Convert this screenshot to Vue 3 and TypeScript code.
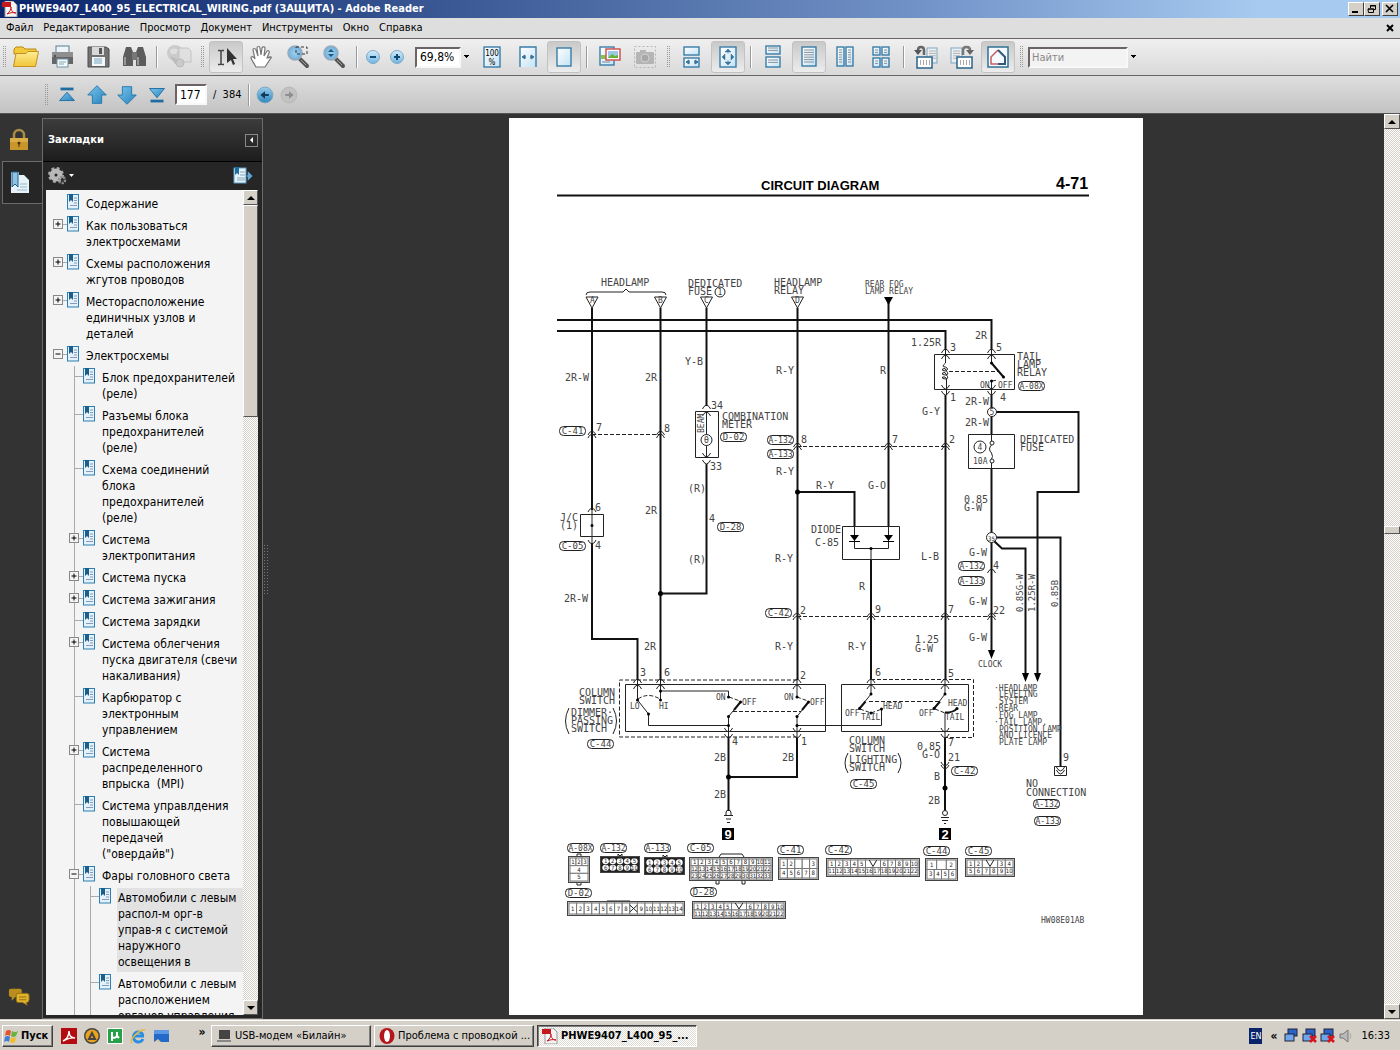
<script setup lang="ts">
import { ref } from 'vue'

interface Bookmark { level: number; text: string; state?: '+' | '−'; selected?: boolean }
interface Tool { kind: 'btn' | 'sep' | 'grip' | 'small'; icon?: string; label?: string; on?: boolean; off?: boolean }

const zoom = ref('69,8%')
const page = ref('177')
const query = ref('')

const menu = ['Файл', 'Редактирование', 'Просмотр', 'Документ', 'Инструменты', 'Окно', 'Справка']

const lens = '<path d="M16 16l7 7" stroke="#555" stroke-width="4" stroke-linecap="round"/><path d="M17 17l5 5" stroke="#999" stroke-width="1"/><circle cx="11" cy="10" r="7" fill="url(#gLens)" stroke="#9ab" stroke-width="1.5"/>'
const sheet = (x: number, y: number, w: number, h: number) =>
  `<rect x="${x}" y="${y}" width="${w}" height="${h}" fill="url(#gPage)" stroke="#3a7ca8" stroke-width="1.4"/>`
const lines = (x: number, y: number, w: number, n: number) =>
  Array.from({ length: n }, (_, i) => `<path d="M${x} ${y + i * 2.4}h${w}" stroke="#8a9298" stroke-width="1"/>`).join('')
const arrowsH = (y: number) =>
  `<path d="M9 ${y}h3M16 ${y}h3M11 ${y - 2}l-3 2 3 2zM17 ${y - 2}l3 2-3 2z" stroke="#3b7397" fill="#3b7397" stroke-width="1"/>`
const calendar = '<rect x="5" y="14" width="15" height="11" fill="#fff" stroke="#2a648b" stroke-width="1.5"/><path d="M8.500 17v5M11.500 17v5M14.500 17v5M17.500 17v5" stroke="#aaa"/>'

const icons: Record<string, string> = {
  open: '<path d="M2 6l2-2h7l2 2h11v5H2z" fill="#f3c93c" stroke="#b98a16"/><path d="M1.500 23.500L4 10.500h10l2-2h10.500l-3 15z" fill="url(#gFold)" stroke="#c0911b"/>',
  print: '<rect x="8" y="3" width="13" height="8" fill="#eef4f8" stroke="#557d95"/><path d="M4 9h21v12H4z" fill="#666"/><path d="M4 9h21v5H4z" fill="#8e8e8e"/><rect x="9" y="16" width="11" height="8" fill="#f4f8fa" stroke="#6c93aa"/><path d="M11 19h7M11 21h5" stroke="#8aa"/><circle cx="7" cy="13" r="1" fill="#3a3a3a"/>',
  save: '<path d="M4 4h18l3 2v18H4z" fill="#727272" stroke="#4d4d4d"/><rect x="8" y="4" width="12" height="8" fill="#d9d9d9"/><rect x="15" y="5" width="3" height="6" fill="#555"/><rect x="8" y="14" width="13" height="9" fill="#f1f7fa"/><path d="M10 16h8M10 18h8M10 20h8" stroke="#7aa6bf"/>',
  find: '<path d="M6 4h5l2 5v14H3V14z" fill="#5c5c5c"/><path d="M18 4h5l3 10v9H16V9z" fill="#5c5c5c"/><rect x="12" y="9" width="5" height="8" fill="#777"/><path d="M5 14v8M18 14v8" stroke="#aaa" stroke-width="1.500"/>',
  collab: '<circle cx="10" cy="10" r="8" fill="#c5c5c5"/><path d="M5 7q4-3 8 0l-2 4H6z" fill="#dedede"/><path d="M14 5h9l3 3v11H14z" fill="#dfdfdf" stroke="#bbb"/><path d="M5 13l7 3 3 4-5 1z" fill="#b2b2b2"/><circle cx="15" cy="20" r="4" fill="#c5c5c5" stroke="#b2b2b2"/>',
  select: '<path d="M6 7.500h2q1 0 1 1 0-1 1-1h2M9 8v13M6 21.500h2q1 0 1-1 0 1 1 1h2" fill="none" stroke="#444" stroke-width="1.500"/><path d="M15 5v15l4-3 2 5 2-1-2-5h4z" fill="#333"/>',
  hand: '<path d="M8 24c-2-4-4-6-5-9 0-2 2-2 4 1L5 7c0-2 2-2 3 0l2 6-1-8c0-2 3-2 3 0l1 7 1-7c1-2 3-1 3 0l-1 8 3-5c1-1 3 0 2 2l-2 5 1 0c2-2 4-1 3 0l-6 9z" fill="#fff" stroke="#777" stroke-width="1.200"/>',
  marquee: lens + '<path d="M12 4h11v7H12z" fill="none" stroke="#333" stroke-dasharray="3 2"/>',
  zoom: lens + '<path d="M8 9l3-3 3 3zM8 11l3 3 3-3z" fill="#1f5578"/>',
  minus: '<circle cx="14" cy="14" r="6.500" fill="url(#gBall)" stroke="#7ea9c4"/><path d="M11 14h6" stroke="#104a72" stroke-width="2"/>',
  plus: '<circle cx="14" cy="14" r="6.500" fill="url(#gBall)" stroke="#7ea9c4"/><path d="M11 14h6M14 11v6" stroke="#104a72" stroke-width="2"/>',
  actual: sheet(6, 4, 16, 20) + '<text x="14" y="13" text-anchor="middle" font-family="DejaVu Sans Condensed" font-size="8">100</text><text x="14" y="22" text-anchor="middle" font-family="DejaVu Sans Condensed" font-size="8">%</text>',
  width: '<path d="M6 24V4h16v20" fill="url(#gPage)" stroke="#3a7ca8" stroke-width="1.400"/>' + arrowsH(14),
  single: sheet(7, 5, 14, 18),
  pics: sheet(5, 4, 14, 18) + '<path d="M6 12h8v4H6z" fill="#8bc34a"/><rect x="11" y="6" width="14" height="11" fill="#fff" stroke="#c55" stroke-width="1.500"/><path d="M13 8h10v7H13z" fill="#9cc9e8"/><path d="M13 15l4-4 3 2 3-1v3z" fill="#65b32e"/><path d="M7 19h8" stroke="#789"/>',
  camera: '<rect x="3.500" y="3.500" width="21" height="21" fill="none" stroke="#aaa" stroke-dasharray="2 2"/><rect x="5" y="9" width="18" height="12" rx="1" fill="#aaa"/><rect x="9" y="7" width="6" height="3" fill="#aaa"/><circle cx="14" cy="15" r="4" fill="#999" stroke="#ccc"/>',
  contw: sheet(6, 4, 15, 8) + sheet(6, 15, 15, 9) + '<g transform="translate(0 5)">' + arrowsH(14) + '</g>',
  fitpage: sheet(6, 4, 16, 20) + '<path d="M14 6l3 3h-6zM14 22l3-3h-6zM8 14l3-3v6zM20 14l-3-3v6zM14 8v3M14 17v3" fill="#3b7397" stroke="#3b7397" stroke-width=".5"/>',
  cont: sheet(7, 3, 14, 8) + lines(9, 5, 10, 2) + sheet(7, 14, 14, 10) + lines(9, 17, 10, 2),
  one: sheet(7, 4, 14, 19) + lines(9, 7, 10, 6),
  two: sheet(6, 4, 7, 19) + sheet(15, 4, 7, 19) + lines(8, 7, 3, 6) + lines(17, 7, 3, 6),
  four: sheet(6, 4, 7, 8) + sheet(15, 4, 7, 8) + sheet(6, 15, 7, 9) + sheet(15, 15, 7, 9) + lines(8, 7, 3, 2) + lines(17, 7, 3, 2) + lines(8, 18, 3, 2) + lines(17, 18, 3, 2),
  rotl: '<g opacity=".6"><rect x="15" y="5" width="10" height="15" fill="#eef5fa" stroke="#3a7ca8"/>' + lines(17, 8, 7, 4) + '</g>' + calendar + '<path d="M12 12V7c0-4-6-4-6 0v1" stroke="#666" stroke-width="2.500" fill="none"/><path d="M2 7h8l-4 5z" fill="#555"/>',
  rotr: '<g opacity=".6"><rect x="3" y="5" width="11" height="15" fill="#eef5fa" stroke="#3a7ca8"/>' + lines(5, 8, 7, 4) + '</g><g transform="translate(4 0)">' + calendar + '</g><path d="M15 12V7c0-4 7-4 7 0v1" stroke="#777" stroke-width="2.500" fill="none"/><path d="M18 7h8l-4 5z" fill="#666"/>',
  home: '<rect x="4" y="4" width="20" height="20" fill="#f4fafd" stroke="#2e7193" stroke-width="1.500"/><path d="M14 7l-7 7v7h7" fill="none" stroke="#c65b66" stroke-width="1.500"/><path d="M14 7l7 7v7h-7" fill="none" stroke="#35587a" stroke-width="2"/>',
  first: '<path d="M7 7.500h14" stroke="#1f6da1" stroke-width="3"/><path d="M14 11l8 9H6z" fill="url(#gBlue)" stroke="#1f6da1"/>',
  prev: '<path d="M14 4l10 10h-5v9H9v-9H4z" fill="url(#gBlue)" stroke="#2377ab"/>',
  next: '<path d="M14 24L4 14h5V5h10v9h5z" fill="url(#gBlue)" stroke="#2377ab"/>',
  last: '<path d="M7 20.500h14" stroke="#1f6da1" stroke-width="3"/><path d="M14 17l8-10H6z" fill="url(#gBlue)" stroke="#1f6da1"/>',
  back: '<circle cx="14" cy="14" r="8.500" fill="url(#gBall2)" stroke="#79a5c0"/><path d="M9 14l5-4v3h4v2h-4v3z" fill="#0e3a5c"/>',
  fwd: '<circle cx="14" cy="14" r="8.500" fill="#c2c2c2" stroke="#b5b5b5"/><path d="M19 14l-5-4v3h-4v2h4v3z" fill="#8e8e8e"/>',
}

const b = (icon: string, label: string, extra: Partial<Tool> = {}): Tool => ({ kind: 'btn', icon, label, ...extra })
const sep: Tool = { kind: 'sep' }
const grip: Tool = { kind: 'grip' }
const toolsA: Tool[] = [
  b('open', 'Открыть'), b('print', 'Печать'), b('save', 'Сохранить'), b('find', 'Поиск'), sep, b('collab', 'Совместная работа', { off: true }), grip,
  b('select', 'Выделение', { on: true }), b('hand', 'Рука'), b('marquee', 'Увеличение области'), b('zoom', 'Динамический масштаб'), sep,
  { kind: 'small', icon: 'minus', label: 'Уменьшить' }, { kind: 'small', icon: 'plus', label: 'Увеличить' },
]
const toolsB: Tool[] = [
  b('actual', 'Реальный размер'), b('width', 'По ширине'), b('single', 'Целиком', { on: true }), sep,
  b('pics', 'Изображения'), b('camera', 'Снимок', { off: true }), grip,
  b('contw', 'Прокрутка по ширине'), b('fitpage', 'По размеру страницы', { on: true }), sep,
  b('cont', 'Непрерывно'), b('one', 'Одна страница', { on: true }), b('two', 'Разворот'), b('four', 'Четыре страницы'), sep,
  b('rotl', 'Повернуть влево'), b('rotr', 'Повернуть вправо'), b('home', 'Сглаживание линий', { on: true }), grip,
]
const navTools: Tool[] = [b('first', 'Первая'), b('prev', 'Предыдущая'), b('next', 'Следующая'), b('last', 'Последняя')]

const bookmarks: Bookmark[] = [
  { level: 0, text: 'Содержание' },
  { level: 0, state: '+', text: 'Как пользоваться\nэлектросхемами' },
  { level: 0, state: '+', text: 'Схемы расположения\nжгутов проводов' },
  { level: 0, state: '+', text: 'Месторасположение\nединичных узлов и\nдеталей' },
  { level: 0, state: '−', text: 'Электросхемы' },
  { level: 1, text: 'Блок предохранителей\n(реле)' },
  { level: 1, text: 'Разъемы блока\nпредохранителей\n(реле)' },
  { level: 1, text: 'Схема соединений\nблока\nпредохранителей\n(реле)' },
  { level: 1, state: '+', text: 'Система\nэлектропитания' },
  { level: 1, state: '+', text: 'Система пуска' },
  { level: 1, state: '+', text: 'Система зажигания' },
  { level: 1, text: 'Система зарядки' },
  { level: 1, state: '+', text: 'Система облегчения\nпуска двигателя (свечи\nнакаливания)' },
  { level: 1, text: 'Карбюратор с\nэлектронным\nуправлением' },
  { level: 1, state: '+', text: 'Система\nраспределенного\nвпрыска  (MPI)' },
  { level: 1, text: 'Система управлдения\nповышающей\nпередачей\n("овердайв")' },
  { level: 1, state: '−', text: 'Фары головного света' },
  { level: 2, selected: true, text: 'Автомобили с левым\nраспол-м орг-в\nуправ-я с системой\nнаружного\nосвещения в' },
  { level: 2, text: 'Автомобили с левым\nрасположением\nорганов управления' },
]

// Wiring sheet. All coordinates are in the user space of the drawing's viewBox.
const wires = [
  'M557 320H991.5V350', 'M557 331H945.500V350', 'M592 308V510', 'M660.500 308V680', 'M706.500 308V406', 'M797.500 308V680',
  'M888.500 300V526', 'M945.500 395V680', 'M991.500 395V434', 'M996 412H1078.500V492H1037.500V676', 'M991.500 469V654',
  'M592 543V639H637.500V680', 'M706.500 464V593.500H660.500', 'M797.500 492H854.500V526', 'M871 560V680', 'M996 537.500H1060.500V767',
  'M994 541L1002 548.500H1025.500V676', 'M728.500 738V811', 'M797 738V777H728.500', 'M945 738V811',
]
const thin = [
  'M586 295q0-3 4-3h33l3-3 3 3h33q4 0 4 3',
  'M586 297h12l-6 11z', 'M654.500 297h12l-6 11z', 'M700.500 297h12l-6 11z', 'M791.500 297h12l-6 11z',
  'M695.500 411.500h23v46h-23z', 'M706.500 411v46', 'M934.500 354.500h80v35h-80z', 'M968.500 434.500h46v34h-46z',
  'M580.500 514.500h23v22h-23z', 'M592 510v33', 'M842.500 526.500h57v33h-57z', 'M854.500 526V548.500H888.500V526', 'M871 548V560',
  'M945.500 350V363q-5 4 0 4q4 2 0 4q-4 0-3-2q3-2 4 2q3 4-1 4q-4 0-3-2q3-2 4 2q3 4-1 4q-4 0-3-2q3-1 4 2V395',
  'M991.500 350V363L1003.500 377', 'M991.500 381V395', 'M991.500 434v7m0 4q-4 4 0 8q2 4 0 6m0 4v6',
  'M625.500 684.500h200v47h-200z', 'M841.500 684.500h127v47h-127z',
  'M637.500 680v20l11 14v11.500h80', 'M660.500 680v20M660.500 691H728.500v6', 'M740.500 702L728.500 716.500V738', 'M797 680V697', 'M808.500 702L797 716.500V738', 'M797 725.500H881.500V709',
  'M871 680v14l-11.500 14.500', 'M945 680v14l-11 14.500', 'M945 712.500V738',
  'M569 708q-7 13 0 26', 'M613 708q7 13 0 26', 'M848 753q-6 10 0 20', 'M898 753q6 10 0 20',
  'M1054.500 766.500h12v9h-12z',
  'M726 815v-2q0-3 2.500-3t2.500 3v2M724 815.500h9M726 819h5M727 822.500h3', 'M941 817.500h8M942 820.500h6M944 823.500h2',
]
const dashed = [
  'M592 434.500H660', 'M797 446.500H945', 'M797 616.500H991', 'M949 371.500H998', 'M797 680H619.500V737H797', 'M871 679.500H973.500V737.500H945',
  'M638 699q10-7 22 0', 'M729 697l11 4', 'M797 697l11 4', 'M733 711.500H801', 'M869 701.500H939', 'M860 709l11 4 11-4', 'M935 709l10 4', 'M992 381l6-1',
]
const heavy = ['M945 712.500q9 0 12-4', 'M991.500 363L1003.500 377', 'M740.500 702L734 710', 'M808.500 702L802 710', 'M859.500 708.500l6-7', 'M934 708.500l6-7']
const solids = ['M884 297h9l-4.500 8z', 'M850 535h9l-4.500 6z', 'M884 535h9l-4.500 6z', 'M849 541h11v1h-11z', 'M883 541h11v1h-11z', 'M988 650h7l-3.500 9z', 'M1022 673h7l-3.500 9z', 'M1034 673h7l-3.500 9z']
const dots: [number, number, number][] = [
  [592, 525.5, 1.5], [660.5, 593.5, 2.5], [797.5, 492, 2.5], [871, 548.5, 1.5], [991.5, 363, 1.5], [1003.5, 377, 1.5], [991.5, 381, 1.5],
  [637.5, 700, 1.5], [660.5, 691, 1.5], [660.5, 700, 1.5], [648.5, 714, 1.5], [728.5, 697, 1.5], [740.5, 702, 1.5], [728.5, 716.5, 1.5], [728.5, 725.5, 1.5],
  [797, 697, 1.5], [808.5, 702, 1.5], [797, 716.5, 1.5], [797, 725.5, 1.5], [728.5, 777, 2.5], [945, 788, 2.5],
  [871, 694, 1.5], [859.5, 708.5, 1.5], [871, 713, 1.5], [881.5, 709, 1.5], [945, 694, 1.5], [934, 708.5, 1.5], [957, 708.5, 1.5],
]
const rings: [number, number, number, string][] = [
  [720, 292, 5, '1'], [706.5, 440, 5.5, 'Ө'], [992, 412, 4.5, '5'], [980, 447, 6, '4'], [992, 443, 2, ''], [992, 461, 2, ''], [991.5, 537.5, 5, '35'], [945, 813, 2.5, ''],
]
const up: [number, number][] = [
  [706.5, 405], [706.5, 412], [945.5, 349], [945.5, 355], [991.5, 349], [991.5, 355], [592, 508], [637.5, 679], [637.5, 685], [660.5, 679], [660.5, 685],
  [797, 679], [797, 685], [871, 679], [871, 685], [945, 679], [945, 685], [592, 431], [592, 434], [660.5, 431], [660.5, 434], [797.5, 443], [797.5, 446],
  [888.5, 443], [888.5, 446], [945.5, 443], [945.5, 446], [797, 613], [797, 616], [871, 613], [871, 616], [945, 613], [945, 616], [991.5, 613], [991.5, 616], [991.5, 569],
]
const down: [number, number][] = [
  [706.5, 457], [706.5, 464], [945.5, 389], [945.5, 395], [991.5, 389], [991.5, 395], [592, 544], [728.5, 732], [728.5, 738], [797, 732], [797, 738],
  [945, 732], [945, 738], [945, 766], [945, 769], [1060.5, 771], [1060.5, 774],
]
const labels: [number, number, string][] = [
  [601, 286, 'HEADLAMP'], [688, 287, 'DEDICATED'], [688, 295, 'FUSE'], [774, 286, 'HEADLAMP'], [774, 294, 'RELAY'],
  [565, 381, '2R-W'], [645, 381, '2R'], [685, 365, 'Y-B'], [776, 374, 'R-Y'], [711, 409, '34'], [596, 431, '7'], [664, 432, '8'],
  [722, 420, 'COMBINATION'], [722, 428, 'METER'], [710, 470, '33'], [801, 443, '8'], [776, 475, 'R-Y'],
  [880, 374, 'R'], [911, 346, '1.25R'], [950, 351, '3'], [975, 339, '2R'], [996, 351, '5'], [1017, 360, 'TAIL'], [1017, 368, 'LAMP'], [1017, 376, 'RELAY'],
  [950, 401, '1'], [1000, 401, '4'], [965, 405, '2R-W'], [922, 415, 'G-Y'], [965, 426, '2R-W'], [892, 443, '7'], [949, 443, '2'],
  [1020, 443, 'DEDICATED'], [1020, 451, 'FUSE'], [688, 492, '(R)'], [709, 522, '4'], [688, 563, '(R)'], [645, 514, '2R'], [595, 511, '6'],
  [560, 521, 'J/C'], [560, 529, '(1)'], [595, 549, '4'], [564, 602, '2R-W'], [644, 650, '2R'], [816, 489, 'R-Y'], [775, 562, 'R-Y'],
  [811, 533, 'DIODE'], [815, 546, 'C-85'], [800, 614, '2'], [775, 650, 'R-Y'], [868, 489, 'G-O'], [921, 560, 'L-B'], [859, 590, 'R'],
  [875, 613, '9'], [948, 613, '7'], [993, 614, '22'], [848, 650, 'R-Y'], [915, 643, '1.25'], [915, 652, 'G-W'], [964, 503, '0.85'], [964, 511, 'G-W'],
  [969, 556, 'G-W'], [993, 569, '4'], [969, 605, 'G-W'], [969, 641, 'G-W'], [640, 676, '3'], [664, 676, '6'], [800, 679, '2'],
  [579, 696, 'COLUMN'], [579, 704, 'SWITCH'], [571, 716, 'DIMMER·'], [571, 724, 'PASSING'], [571, 732, 'SWITCH'], [732, 745, '4'], [801, 745, '1'],
  [714, 761, '2B'], [782, 761, '2B'], [714, 798, '2B'], [875, 676, '6'], [948, 677, '5'], [849, 744, 'COLUMN'], [849, 752, 'SWITCH'],
  [849, 763, 'LIGHTING'], [849, 771, 'SWITCH'], [948, 746, '7'], [917, 750, '0.85'], [922, 758, 'G-O'], [948, 761, '21'], [934, 780, 'B'], [928, 804, '2B'],
  [1063, 761, '9'], [1026, 787, 'NO'], [1026, 796, 'CONNECTION'],
]
const small: [number, number, string][] = [
  [865, 287, 'REAR FOG'], [865, 294, 'LAMP RELAY'], [980, 388, 'ON'], [998, 388, 'OFF'], [973, 464, '10A'], [978, 667, 'CLOCK'],
  [630, 709, 'LO'], [659, 709, 'HI'], [716, 700, 'ON'], [742, 705, 'OFF'], [784, 700, 'ON'], [810, 705, 'OFF'],
  [845, 716, 'OFF'], [861, 720, 'TAIL'], [883, 709, 'HEAD'], [919, 716, 'OFF'], [948, 706, 'HEAD'], [945, 720, 'TAIL'],
  [994, 691, '·HEADLAMP'], [999, 697, 'LEVELING'], [999, 704, 'SYSTEM'], [994, 711, '·REAR'], [999, 718, 'FOG LAMP'], [994, 725, '·TAIL LAMP,'],
  [999, 732, 'POSITION LAMP'], [999, 738, 'AND LICENCE'], [999, 745, 'PLATE LAMP'], [1041, 923, 'HW08E01AB'],
  [590, 303, 'A'], [658, 303, 'B'], [704, 303, 'C'], [795, 303, 'D'],
]
const upright: [number, number, string][] = [[704, 433, 'BEAM'], [1023, 612, '0.85G-W'], [1035, 612, '1.25R-W'], [1058, 607, '0.85B']]
const tags: [number, number, string][] = [
  [559, 426, 'C-41'], [720, 432, 'D-02'], [767, 435, 'A-132'], [767, 449, 'A-133'], [1018, 381, 'A-08X'], [717, 522, 'D-28'], [559, 541, 'C-05'],
  [765, 608, 'C-42'], [958, 561, 'A-132'], [958, 576, 'A-133'], [587, 739, 'C-44'], [850, 779, 'C-45'], [951, 766, 'C-42'], [1033, 799, 'A-132'],
  [1034, 816, 'A-133'], [567, 843, 'A-08X'], [600, 843, 'A-132'], [644, 843, 'A-133'], [687, 843, 'C-05'], [777, 845, 'C-41'], [825, 845, 'C-42'],
  [923, 846, 'C-44'], [965, 846, 'C-45'], [565, 888, 'D-02'], [690, 887, 'D-28'],
]
const range = (a: number, z: number) => Array.from({ length: z - a + 1 }, (_, i) => String(a + i))
interface Plug { x: number; y: number; w: number; h: number; rows: string[][]; round?: boolean }
const plugs: Plug[] = [
  { x: 568, y: 856, w: 22, h: 27, rows: [['1', '2', '3'], ['4'], ['5']] },
  { x: 600, y: 856, w: 40, h: 17, rows: [range(1, 5), range(6, 10)], round: true },
  { x: 644, y: 857, w: 41, h: 18, rows: [range(1, 5), range(6, 10)], round: true },
  { x: 689, y: 857, w: 84, h: 24, rows: [range(1, 11), range(12, 22), range(23, 33)] },
  { x: 778, y: 857, w: 41, h: 23, rows: [['1', '2', '', '', '3'], range(4, 8)] },
  { x: 826, y: 858, w: 94, h: 19, rows: [[...range(1, 5), 'V', ...range(6, 10)], range(11, 22)] },
  { x: 925, y: 858, w: 33, h: 23, rows: [['1', '', '2'], range(3, 6)] },
  { x: 965, y: 858, w: 50, h: 19, rows: [['1', '2', 'V', '3', '4'], range(5, 10)] },
  { x: 567, y: 901, w: 118, h: 15, rows: [[...range(1, 8), 'X', ...range(9, 14)]] },
  { x: 692, y: 901, w: 94, h: 18, rows: [[...range(1, 5), 'V', ...range(6, 10)], range(11, 22)] },
]
const keys = ['M719 857l2-3h21l2 3', 'M716 881v3h3v-3M742 881v3h3v-3', 'M577 856v-2h4v2M577 883v2h4v-2', 'M618 856v-2l2 2 2-2v2M663 857v-2l2 2 2-2v2', 'M607 903v-2h23v2M615 916l1-4 2 4M635 916l1-4 2 4']
interface Cell { x: number; y: number; w: number; h: number; t: string }
function cells(p: Plug): Cell[] {
  const h = (p.h - 4) / p.rows.length
  return p.rows.flatMap((row, r) => {
    const unit = (p.w - 4) / (row.length + (row.includes('V') ? 1 : 0))
    let x = p.x + 2
    return row.map(t => {
      const w = t === 'V' ? unit * 2 : unit
      const cell = { x, y: p.y + 2 + r * h, w, h, t }
      x += w
      return cell
    })
  })
}
const mark = (c: Cell) => c.t === 'V'
  ? `M${c.x + c.w * 0.25} ${c.y}L${c.x + c.w / 2} ${c.y + c.h - 1}L${c.x + c.w * 0.75} ${c.y}`
  : `M${c.x} ${c.y + 2}L${c.x + c.w} ${c.y + c.h - 2}M${c.x + c.w} ${c.y + 2}L${c.x} ${c.y + c.h - 2}`

const pdfIcon = '<path d="M3 0h8l4 4v12H3z" fill="#f4f4f4" stroke="#999"/><path d="M0 1h9v5H0z" fill="#c8161d"/><path d="M5 13c3-2 4-5 4-7 0 4 2 6 5 6-4-1-6 0-9 1z" fill="none" stroke="#c8161d"/>'
const quick: { label: string; art: string }[] = [
  { label: 'Adobe Reader', art: '<rect width="16" height="16" fill="#b30b10"/><path d="M2 13c4-2 6-6 6-10 0 5 2 7 6 7-5-1-8 1-12 3z" fill="none" stroke="#fff" stroke-width="1.500"/>' },
  { label: 'AIMP', art: '<circle cx="8" cy="8" r="8" fill="#444"/><circle cx="8" cy="8" r="6.500" fill="#e9a41e"/><path d="M8 5l3 6H5z" fill="none" stroke="#444" stroke-width="2"/>' },
  { label: 'µTorrent', art: '<rect width="16" height="16" fill="#fff"/><rect x="1" y="1" width="14" height="14" fill="#28a04a"/><path d="M5 13V4M5 9q3 2 5-1V4M10 8l2 2" stroke="#fff" stroke-width="2" fill="none"/>' },
  { label: 'Internet Explorer', art: '<path d="M13 11a5 5 0 1 1 0-4M4 8h10" fill="none" stroke="#2a8fe0" stroke-width="3"/><path d="M2 15C-1 12 9 1 15 2" fill="none" stroke="#e9b83c" stroke-width="1.500"/>' },
  { label: 'Рабочий стол', art: '<rect x="1" y="2" width="15" height="12" fill="#2468c8"/><path d="M1 2h15v4H1z" fill="#5b97e2"/><path d="M1 14l4-3 3 3z" fill="#d9c9a0"/>' },
]
const tasks = [
  { text: 'USB-модем «Билайн»', art: '<path d="M3 2h11v9H3z" fill="#444"/><path d="M1 12h14v2H1z" fill="#888"/>', on: false },
  { text: 'Проблема с проводкой ...', art: '<ellipse cx="8" cy="8" rx="7.500" ry="8" fill="#b5161b"/><ellipse cx="8" cy="8" rx="3" ry="6" fill="#fff"/>', on: false },
  { text: 'PHWE9407_L400_95_...', art: pdfIcon, on: true },
]
const monitor = '<rect x="4" y="1" width="9" height="7" fill="#2a62c9" stroke="#223"/><rect x="1" y="6" width="9" height="7" fill="#6fa6ee" stroke="#223"/>'
const redX = '<path d="M8 8l6 6M14 8l-6 6" stroke="#d8141b" stroke-width="2.500"/>'
const tray = [monitor, monitor + redX, monitor + redX, '<path d="M2 6h3l5-4v12l-5-4H2z" fill="#b9b9b9" stroke="#777"/><path d="M12 5q2 3 0 6" fill="none" stroke="#aaa"/>']
</script>

<template>
  <div class="app">
    <svg class="defs" aria-hidden="true">
      <defs>
        <linearGradient id="gPage" x2="1" y2="1"><stop stop-color="#fff" /><stop offset="1" stop-color="#c3e2f4" /></linearGradient>
        <linearGradient id="gFold" x2="0" y2="1"><stop stop-color="#fdee9a" /><stop offset="1" stop-color="#f2c534" /></linearGradient>
        <linearGradient id="gBlue" x2="1" y2="1"><stop stop-color="#7cc4ee" /><stop offset="1" stop-color="#2783bb" /></linearGradient>
        <radialGradient id="gLens"><stop stop-color="#9fd3f3" /><stop offset="1" stop-color="#6fb0da" /></radialGradient>
        <linearGradient id="gBall" x2="0" y2="1"><stop stop-color="#d6ecfa" /><stop offset="1" stop-color="#6fb4e2" /></linearGradient>
        <linearGradient id="gBall2" x2="0" y2="1"><stop stop-color="#9bcdec" /><stop offset="1" stop-color="#2f86bd" /></linearGradient>
      </defs>
    </svg>

    <header class="title">
      <svg class="i16" viewBox="0 0 16 16" v-html="pdfIcon" />
      <span class="title-text">PHWE9407_L400_95_ELECTRICAL_WIRING.pdf (ЗАЩИТА) - Adobe Reader</span>
      <button class="win" aria-label="Свернуть"><svg viewBox="0 0 12 10"><path d="M2 8h6" stroke="#000" stroke-width="2" /></svg></button>
      <button class="win" aria-label="Восстановить"><svg viewBox="0 0 12 10"><path d="M4.500 4V1.500h5v4H8M2 5h5.500v3.500h-5zM4 2h6M2 5h6" fill="none" stroke="#000" /></svg></button>
      <button class="win close" aria-label="Закрыть"><svg viewBox="0 0 12 10"><path d="M2 1l7 7M9 1L2 8" stroke="#000" stroke-width="1.600" /></svg></button>
    </header>

    <nav class="menu">
      <button v-for="m in menu" :key="m">{{ m }}</button>
      <button class="doc-close" aria-label="Закрыть документ"><svg viewBox="0 0 8 8"><path d="M1 1l6 6M7 1L1 7" stroke="#000" stroke-width="2" /></svg></button>
    </nav>

    <div class="bar">
      <i class="grip lead" />
      <template v-for="(t, n) in toolsA" :key="n">
        <i v-if="t.kind === 'sep' || t.kind === 'grip'" :class="t.kind" />
        <button v-else class="tool" :class="{ on: t.on, off: t.off, small: t.kind === 'small' }" :aria-label="t.label"><svg viewBox="0 0 28 28" v-html="icons[t.icon!]" /></button>
      </template>
      <input v-model="zoom" class="field zoom" aria-label="Масштаб"><button class="drop" aria-label="Список масштабов" />
      <template v-for="(t, n) in toolsB" :key="n">
        <i v-if="t.kind === 'sep' || t.kind === 'grip'" :class="t.kind" />
        <button v-else class="tool" :class="{ on: t.on, off: t.off }" :aria-label="t.label"><svg viewBox="0 0 28 28" v-html="icons[t.icon!]" /></button>
      </template>
      <input v-model="query" class="field search" placeholder="Найти" aria-label="Найти"><button class="drop" aria-label="Параметры поиска" />
    </div>

    <div class="bar nav">
      <i class="grip" />
      <button v-for="t in navTools" :key="t.label" class="tool" :aria-label="t.label"><svg viewBox="0 0 28 28" v-html="icons[t.icon!]" /></button>
      <input v-model="page" class="field num" aria-label="Страница"><span class="total">/&nbsp; 384</span>
      <i class="sep" />
      <button class="tool short" aria-label="Назад"><svg viewBox="0 0 28 28" v-html="icons.back" /></button>
      <button class="tool short" aria-label="Вперед"><svg viewBox="0 0 28 28" v-html="icons.fwd" /></button>
    </div>

    <main class="body">
      <div class="rail">
        <button aria-label="Защита"><svg viewBox="0 0 22 24"><path d="M6 11V7a5 5 0 0 1 10 0v4" fill="none" stroke="#a98c45" stroke-width="2.500" /><rect x="2" y="10" width="18" height="12" fill="#c9962c" /><path d="M2 10h18v4H2z" fill="#d9ac48" /><circle cx="11" cy="15" r="1.500" fill="#4a3510" /><path d="M11 15v4" stroke="#4a3510" /></svg></button>
        <button class="current" aria-label="Закладки"><svg viewBox="0 0 22 24"><path d="M6 4h9l5 5v13H2V1h8v3z" fill="#e5f2fa" /><path d="M3 1h6v15l-3-3-3 3z" fill="#8fc3e4" stroke="#1e5f88" /><path d="M11 13h7M11 16h7M8 19h10" stroke="#9bb7c8" /></svg></button>
        <button class="notes" aria-label="Комментарии"><svg viewBox="0 0 24 20"><path d="M3 1h10q2 0 2 2v5q0 2-2 2H8l-4 4v-4q-3 0-3-2V3q0-2 2-2z" fill="#b98e1f" /><path d="M11 6h9q3 0 3 2v5q0 3-3 3l1 3-5-3h-5q-2 0-2-3V8q0-2 2-2z" fill="#e0b32f" stroke="#8f6a10" /><path d="M12 10h8M12 13h8" stroke="#8f6a10" /></svg></button>
      </div>

      <aside class="panel">
        <div class="panel-head"><h2>Закладки</h2><button class="collapse" aria-label="Свернуть панель" /></div>
        <div class="panel-tools">
          <button aria-label="Параметры"><svg width="28" height="20" viewBox="0 0 28 20"><circle cx="8" cy="9" r="6" fill="none" stroke="#a8a8a8" stroke-width="4" stroke-dasharray="2.500 2.200" /><circle cx="8" cy="9" r="4" fill="none" stroke="#b8b8b8" stroke-width="5" /><circle cx="14" cy="14" r="3" fill="none" stroke="#8e8e8e" stroke-width="2.500" stroke-dasharray="2 1" /><path d="M21 8h5l-2.500 3z" fill="#fff" /></svg></button>
          <button aria-label="Развернуть закладку"><svg width="20" height="18" viewBox="0 0 20 18"><rect x="1" y="1" width="12" height="15" fill="#e5f2fa" stroke="#5a9cc4" /><path d="M2 0h4v8L4 6 2 8z" fill="#1e6f9f" /><path d="M7 5h5M7 8h5M4 11h8M4 13h8" stroke="#8ab" /><path d="M14 9h2M15.500 6l3 3-3 3z" fill="#5ea9d4" stroke="#5ea9d4" stroke-width="1.500" /></svg></button>
        </div>
        <div class="panel-view">
          <ul class="tree">
            <li v-for="(m, n) in bookmarks" :key="n">
              <span v-for="k in m.level" :key="k" class="indent" :class="{ guide: k > 1 }" />
              <span class="knob" :class="{ guide: m.level > 0, joined: m.level > 0 || m.state }">
                <button v-if="m.state" :aria-label="m.state === '+' ? 'Развернуть' : 'Свернуть'"><svg viewBox="0 0 8 8"><path :d="m.state === '+' ? 'M1.500 4h5M4 1.500v5' : 'M1.500 4h5'" stroke="#000" /></svg></button>
              </span>
              <svg class="mark" viewBox="0 0 14 16"><rect x="1.500" y=".5" width="11" height="14.500" fill="#e2f1fa" stroke="#2c7fb0" /><path d="M3 0h4v8L5 6 3 8z" fill="#1a5f8a" /><path d="M8 4h3M8 6.500h3M8 9h3M4 11.500h7" stroke="#89b" /></svg>
              <a href="#" :class="{ selected: m.selected }">{{ m.text }}</a>
            </li>
          </ul>
          <div class="scroll"><button class="up" aria-label="Вверх" /><div class="thumb side" /><div class="track" /><button class="down" aria-label="Вниз" /></div>
        </div>
      </aside>
      <div class="splitter" />

      <section class="doc">
        <div class="sheet">
          <svg viewBox="509 118 634 897" role="img" aria-label="Circuit diagram">
            <rect x="509" y="118" width="634" height="897" fill="#fff" />
            <text x="761" y="190" class="h1">CIRCUIT DIAGRAM</text>
            <text x="1056" y="189" class="h2">4-71</text>
            <path d="M557 195.500H1089" class="wire" />
            <path v-for="(d, n) in wires" :key="'w' + n" :d="d" class="wire" />
            <path v-for="(d, n) in thin" :key="'t' + n" :d="d" class="thin" />
            <path v-for="(d, n) in dashed" :key="'d' + n" :d="d" class="thin dash" />
            <path v-for="(d, n) in heavy" :key="'h' + n" :d="d" class="wire" />
            <path v-for="(d, n) in solids" :key="'s' + n" :d="d" />
            <circle v-for="([x, y, r], n) in dots" :key="'o' + n" :cx="x" :cy="y" :r="r" />
            <g v-for="([x, y, r, t], n) in rings" :key="'r' + n">
              <circle :cx="x" :cy="y" :r="r" fill="#fff" class="ring" /><text v-if="t" :x="x" :y="y + 3" class="mid" :class="t.length > 1 ? 's6' : 's8'">{{ t }}</text>
            </g>
            <path v-for="([x, y], n) in up" :key="'u' + n" :d="`M${x - 4} ${y + 4}Q${x - 3} ${y + 1} ${x} ${y}Q${x + 3} ${y + 1} ${x + 4} ${y + 4}`" class="thin" />
            <path v-for="([x, y], n) in down" :key="'v' + n" :d="`M${x - 4} ${y - 4}Q${x - 3} ${y - 1} ${x} ${y}Q${x + 3} ${y - 1} ${x + 4} ${y - 4}`" class="thin" />
            <text v-for="([x, y, t], n) in labels" :key="'l' + n" :x="x" :y="y" class="s10">{{ t }}</text>
            <text v-for="([x, y, t], n) in small" :key="'m' + n" :x="x" :y="y" class="s8">{{ t }}</text>
            <text v-for="([x, y, t], n) in upright" :key="'p' + n" :transform="`translate(${x} ${y}) rotate(-90)`" :class="t === 'BEAM' ? 's8' : 's9'">{{ t }}</text>
            <g v-for="([x, y, t], n) in tags" :key="'g' + n">
              <rect :x="x + 0.5" :y="y + 0.5" width="26" height="9" rx="4" class="thin" /><text :x="x + 13.5" :y="y + 8" class="mid" :class="t.length > 4 ? 's8' : 's9'">{{ t }}</text>
            </g>
            <path v-for="(d, n) in keys" :key="'k' + n" :d="d" class="thin" />
            <g v-for="(p, n) in plugs" :key="'c' + n">
              <rect :x="p.x + 0.5" :y="p.y + 0.5" :width="p.w - 1" :height="p.h - 1" class="shell" :class="{ dark: p.round }" />
              <template v-for="(c, k) in cells(p)" :key="k">
                <ellipse v-if="p.round" :cx="c.x + c.w / 2" :cy="c.y + c.h / 2" :rx="c.w / 2 - 0.3" :ry="c.h / 2 - 0.3" fill="#fff" />
                <rect v-else :x="c.x" :y="c.y" :width="c.w" :height="c.h" class="cell" />
                <path v-if="c.t === 'V' || c.t === 'X'" :d="mark(c)" class="thin" />
                <text v-else-if="c.t" :x="c.x + c.w / 2" :y="c.y + c.h / 2 + 2" class="s6 mid">{{ c.t }}</text>
              </template>
            </g>
            <path d="M722 828h12v12h-12zM939 828h12v12h-12z" />
            <text x="728" y="839" class="ground mid">9</text>
            <text x="945" y="839" class="ground mid">2</text>
          </svg>
        </div>
      </section>
      <div class="scroll wide"><button class="up" aria-label="Вверх" /><div class="track" /><div class="thumb" /><div class="track" /><button class="down" aria-label="Вниз" /></div>
    </main>

    <footer class="taskbar">
      <button class="start"><svg class="i16" viewBox="0 0 16 16"><path d="M2 3q3-2 5 0L6 8Q3 6 1 8z" fill="#e5532d" /><path d="M8 3q3 2 6 0l-2 5q-3 2-5 0z" fill="#6cb33f" /><path d="M1 9q3-2 5 0l-1 5q-2-2-5 0z" fill="#3f7fd8" /><path d="M7 9q3 2 5 0l-1 5q-3 2-5 0z" fill="#f3bd2a" /></svg>Пуск</button>
      <div class="quick">
        <button v-for="q in quick" :key="q.label" :aria-label="q.label"><svg class="i16" viewBox="0 0 16 16" v-html="q.art" /></button>
      </div>
      <button class="more">»</button>
      <button v-for="t in tasks" :key="t.text" class="task" :class="{ on: t.on }"><svg class="i16" viewBox="0 0 16 16" v-html="t.art" /><span>{{ t.text }}</span></button>
      <div class="tray">
        <span class="lang">EN</span><span class="chev">«</span>
        <svg v-for="(t, n) in tray" :key="n" class="i16" viewBox="0 0 16 16" v-html="t" />
        <time>16:33</time>
      </div>
    </footer>
  </div>
</template>

<style>
html, body { margin: 0; background: #333; }
</style>

<style scoped>
.app { display: flex; flex-direction: column; height: 100vh; overflow: hidden; font: 11px/14px "DejaVu Sans Condensed", "Liberation Sans", sans-serif; color: #000; background: #333; }
.defs { position: absolute; width: 0; height: 0; }
button { font: inherit; color: inherit; border: 0; padding: 0; margin: 0; background: none; }
svg { display: block; }
.i16 { width: 16px; height: 16px; flex: none; }
input { font: inherit; color: inherit; box-sizing: border-box; }

.title { display: flex; align-items: center; flex: none; height: 18px; padding: 0 2px; background: linear-gradient(90deg, #0a246a 0%, #3c5a96 33%, #7293c8 66%, #a6caf0 90%); color: #fff; }
.title-text { flex: 1; margin-left: 1px; font-weight: bold; white-space: nowrap; }
.win { width: 16px; height: 14px; padding: 1px; box-sizing: border-box; background: #d4d0c8; border: 1px solid; border-color: #fff #404040 #404040 #fff; }
.win.close { margin-left: 2px; }

.menu { display: flex; align-items: center; flex: none; height: 20px; padding: 0 6px; gap: 10px; background: #dedede; border-bottom: 1px solid #6b6466; }
.doc-close { width: 8px; margin-left: auto; }

.bar { display: flex; align-items: center; flex: none; gap: 2px; height: 36px; background: linear-gradient(#f0f0f0, #d9d9d9); border-bottom: 1px solid #6b6466; }
.grip, .sep { flex: none; width: 9px; height: 22px; }
.grip { background: repeating-linear-gradient(#999 0 1px, transparent 1px 2px) 3px 0 / 1px 100% no-repeat, repeating-linear-gradient(#999 0 1px, transparent 1px 2px) 5px 0 / 1px 100% no-repeat; }
.grip.lead { width: 7px; }
.sep { width: 7px; background: linear-gradient(90deg, transparent 3px, #999 3px, #999 4px, #fff 4px, #fff 5px, transparent 5px); }
.tool { flex: none; width: 34px; height: 32px; box-sizing: border-box; border: 1px solid transparent; border-radius: 3px; }
.tool svg { width: 28px; height: 28px; margin: 1px 2px; }
.tool.on { background: linear-gradient(#c9c9c9, #ececec); border-color: #c2c2c2; }
.tool.off { opacity: 0.8; }
.tool.small { width: 22px; }
.tool.small svg { margin: 0 -4px; }
.field { height: 21px; padding: 0 3px; border: 2px solid; border-color: #6a6466 #f8f8f8 #f8f8f8 #6a6466; border-radius: 0; background: #fff; font-size: 12px; outline: 0; }
.zoom { width: 46px; margin-left: 5px; }
.search { width: 100px; padding: 0 2px; background: #f3f3f3; font-size: 11px; }
.search::placeholder { color: #888; opacity: 1; }
.drop { flex: none; width: 7px; height: 20px; margin-right: 3px; background: linear-gradient(#000, #000) 1px 8px / 5px 1px no-repeat, linear-gradient(#000, #000) 2px 9px / 3px 1px no-repeat, linear-gradient(#000, #000) 3px 10px / 1px 1px no-repeat; }
.nav { height: 37px; padding-left: 42px; background: linear-gradient(#dedede, #c3c3c3); border-color: #555; }
.nav .tool { width: 28px; }
.nav .tool svg { width: 26px; height: 26px; margin: 2px 0; }
.nav .tool.short { width: 22px; }
.nav .tool.short svg { margin: 2px -3px; }
.num { width: 32px; margin-left: 2px; }
.total { width: 30px; margin-left: 4px; white-space: nowrap; font-size: 11px; }

.body { display: flex; flex: 1; min-height: 0; background: #333; }
.rail { display: flex; flex-direction: column; flex: none; width: 42px; padding-top: 4px; box-sizing: border-box; }
.rail button { height: 43px; display: flex; align-items: center; padding-left: 8px; }
.rail svg { width: 22px; height: 24px; }
.rail .current { margin-left: 2px; padding-left: 6px; border: 1px solid #6b6b6b; border-right: 0; background: #262626; }
.rail .notes { margin-top: auto; height: 44px; }
.panel { display: flex; flex-direction: column; flex: none; width: 221px; box-sizing: border-box; margin: 4px 0 0; border: 1px solid #6b6b6b; background: #262626; }
.panel-head { display: flex; align-items: center; flex: none; height: 42px; padding: 0 4px 0 5px; background: linear-gradient(#3c3c3c, #1d1d1d); border-bottom: 1px solid #000; color: #fff; }
.panel-head h2 { flex: 1; margin: 0; font-size: 11px; }
.collapse { display: flex; align-items: center; justify-content: center; width: 13px; height: 13px; box-sizing: border-box; border: 1px solid #8a8a8a; }
.collapse::after { content: ""; border: 3px solid transparent; border-right-color: #fff; border-left: 0; }
.panel-tools { display: flex; align-items: center; justify-content: space-between; flex: none; height: 28px; padding: 0 9px 0 5px; }
.panel-view { display: flex; flex: 1; min-height: 0; margin: 0 4px 3px 3px; background: #f4f4f4; }
.tree { flex: 1; min-width: 0; margin: 0; padding: 2px 0 0 7px; overflow: hidden; list-style: none; font-size: 12px; line-height: 16px; }
.tree li { display: flex; align-items: stretch; }
.indent { flex: none; width: 16px; }
.knob { flex: none; width: 13px; position: relative; }
.guide { background: linear-gradient(#aaa, #aaa) 5px 0 / 1px 100% no-repeat; }
.joined::before { content: ""; position: absolute; left: 5px; top: 10px; width: 9px; height: 1px; background: #aaa; }
.knob button { position: relative; display: block; width: 10px; height: 10px; margin-top: 5px; box-sizing: border-box; border: 1px solid #888; background: #f4f4f4; }
.mark { flex: none; width: 14px; height: 16px; margin-top: 2px; }
.tree a { margin: 2px 0 0 5px; padding: 2px 0 2px 1px; color: #000; text-decoration: none; white-space: pre; flex: 1; min-width: 0; }
.tree a.selected { background: #e2e2e2; }
.scroll { display: flex; flex-direction: column; flex: none; width: 15px; }
.scroll.wide { width: 16px; }
.scroll button { position: relative; flex: none; height: 15px; border: 1px solid; border-color: #fff #555 #555 #fff; background: #d4d0c8; }
.scroll button::after { content: ""; position: absolute; left: calc(50% - 4px); top: 5px; border: 4px solid transparent; }
.scroll .up::after { border-bottom-color: #000; border-top: 0; }
.scroll .down::after { border-top-color: #000; border-bottom: 0; }
.track { flex: 1; background: repeating-conic-gradient(#fff 0 25%, #d4d0c8 0 50%) 0 0 / 2px 2px; }
.thumb { flex: none; height: 6px; background: #d4d0c8; border: 1px solid; border-color: #fff #555 #555 #fff; }
.thumb.side { height: 210px; }
.wide .track:nth-child(2) { flex: 397; }
.wide .track:nth-child(4) { flex: 469; }
.splitter { flex: none; width: 5px; background: radial-gradient(circle, #777 0.5px, transparent 1px) 0 50% / 3px 3px; background-clip: content-box; padding: 430px 0 425px; box-sizing: border-box; }
.doc { flex: 1; min-width: 0; display: flex; justify-content: center; padding: 4px 0; }
.sheet { height: 100%; aspect-ratio: 634 / 897; background: #fff; }
.sheet svg { width: 100%; height: 100%; }

.wire { fill: none; stroke: #111; stroke-width: 2; }
.thin { fill: none; stroke: #222; stroke-width: 1; }
.dash { stroke-dasharray: 4 2; }
.ring { stroke: #222; }
.s10, .s9, .s8 { font-family: "DejaVu Sans Mono", monospace; fill: #444; }
.s6 { font-family: "DejaVu Sans Condensed", sans-serif; fill: #222; }
.s10 { font-size: 10px; }
.s9 { font-size: 9px; }
.s8 { font-size: 8px; }
.s6 { font-size: 6px; }
.mid { text-anchor: middle; }
.h1, .h2, .ground { font-family: "Liberation Sans", Arial, sans-serif; font-weight: bold; }
.h1 { font-size: 13px; }
.h2 { font-size: 16px; }
.ground { font-size: 13px; fill: #fff; }
.shell { fill: #ddd; stroke: #444; }
.shell.dark { fill: #222; }
.cell { fill: #fff; stroke: #777; stroke-width: 1; }

.taskbar { display: flex; align-items: center; flex: none; height: 31px; box-sizing: border-box; padding: 2px 10px 0 2px; background: linear-gradient(#d4d0c8 1px, #fff 1px, #fff 2px, #d4d0c8 2px); }
.start, .task { display: flex; align-items: center; flex: none; height: 22px; box-sizing: border-box; border: 1px solid; border-color: #fff #404040 #404040 #fff; box-shadow: inset -1px -1px #808080; background: #d4d0c8; white-space: nowrap; }
.start { width: 51px; gap: 1px; padding-left: 1px; font-weight: bold; font-size: 11px; overflow: hidden; }
.quick { display: flex; gap: 7px; margin-left: 8px; }
.more { width: 16px; margin: 0 1px 8px 25px; font-weight: bold; font-size: 12px; }
.task { width: 160px; margin-right: 3px; padding: 0 4px; gap: 3px; overflow: hidden; }
.task.on { border-color: #404040 #fff #fff #404040; box-shadow: inset 1px 1px #808080; background: repeating-conic-gradient(#fff 0 25%, #dedbd5 0 50%) 0 0 / 2px 2px; font-weight: bold; }
.tray { display: flex; align-items: center; gap: 2px; margin-left: auto; }
.lang { width: 13px; padding: 1px 0; background: #0a246a; color: #fff; font-size: 9px; text-align: center; }
.chev { width: 12px; margin-left: 6px; font-weight: bold; font-size: 12px; }
.tray time { margin-left: 5px; }
</style>
